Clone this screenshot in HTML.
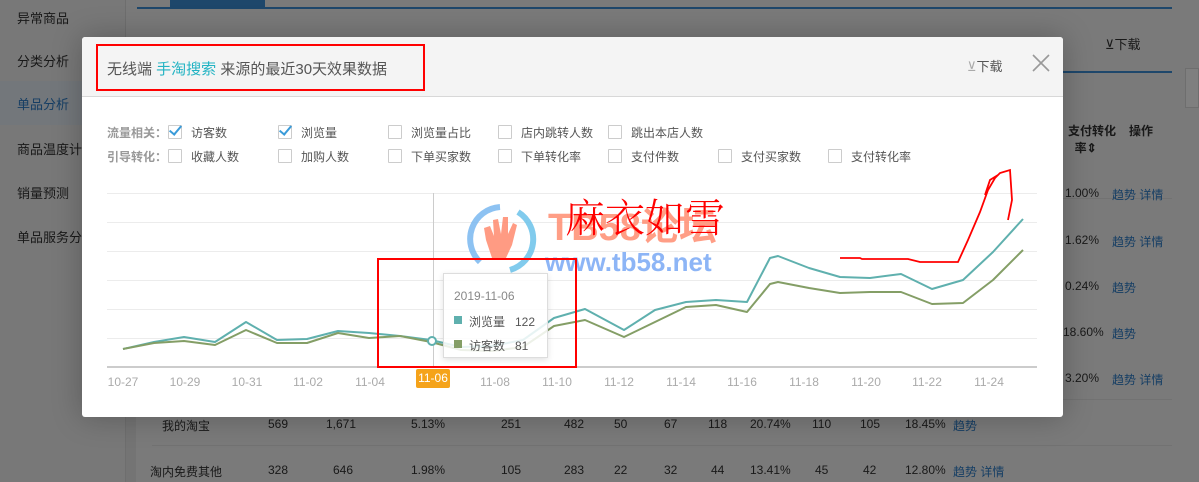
<!DOCTYPE html>
<html><head><meta charset="utf-8"><style>
*{margin:0;padding:0;box-sizing:border-box}
body{width:1199px;height:482px;overflow:hidden;font-family:"Liberation Sans","Noto Sans CJK SC",sans-serif;position:relative;font-size:12px;background:#f5f5f5}
.a{position:absolute;white-space:nowrap}
.side{position:absolute;left:0;top:0;width:126px;height:482px;background:#f0f0f0;border-right:1px solid #ddd}
.side div{position:absolute;left:17px;font-size:13px;color:#333}
.cb{position:absolute;width:14px;height:14px;border:1px solid #ccc;background:#fff;border-radius:1px}
.lb{position:absolute;font-size:12px;color:#555}
.ck::after{content:"";position:absolute;left:3px;top:-3px;width:5px;height:10px;border-right:2px solid #3a9bd9;border-bottom:2px solid #3a9bd9;transform:rotate(40deg)}
.xl{position:absolute;top:375px;font-size:12px;color:#aaa;width:40px;text-align:center}
.tr{position:absolute;font-size:12px;color:#333}
.lk{color:#2c7dc8}
.ov{position:absolute;left:0;top:0;width:1199px;height:482px;background:rgba(0,0,0,0.5)}
</style></head><body>
<div class="side">
<div style="top:8px">异常商品</div>
<div style="top:51px">分类分析</div>
<div style="top:81px;left:0;width:126px;height:44px;background:#e6eef7"></div>
<div style="top:94px;color:#2c7dc8">单品分析</div>
<div style="top:139px">商品温度计</div>
<div style="top:183px">销量预测</div>
<div style="top:227px">单品服务分</div>
</div>
<div class="a" style="left:137px;top:0;width:1035px;height:9px;border-bottom:2px solid #3d8fd6"></div>
<div class="a" style="left:170px;top:0;width:95px;height:9px;background:#3d8fd6"></div>
<div class="a" style="left:1060px;top:71px;width:112px;height:2px;background:#3d8fd6"></div>
<div class="a" style="left:1105px;top:34px;font-size:13px;color:#333">⊻下载</div>
<div class="a" style="left:1185px;top:68px;width:14px;height:40px;border:1px solid #ddd;background:#fff"></div>
<div class="a" style="left:1062px;top:198px;width:110px;height:1px;background:#e5e5e5"></div>
<div class="tr" style="left:1068px;top:122px;font-weight:bold">支付转化<br>&nbsp;&nbsp;率⇕</div>
<div class="tr" style="left:1129px;top:122px;font-weight:bold">操作</div>
<div class="tr" style="left:1065px;top:186px">1.00%</div><div class="tr lk" style="left:1112px;top:186px">趋势 详情</div>
<div class="tr" style="left:1065px;top:233px">1.62%</div><div class="tr lk" style="left:1112px;top:233px">趋势 详情</div>
<div class="tr" style="left:1065px;top:279px">0.24%</div><div class="tr lk" style="left:1112px;top:279px">趋势</div>
<div class="tr" style="left:1063px;top:325px">18.60%</div><div class="tr lk" style="left:1112px;top:325px">趋势</div>
<div class="tr" style="left:1065px;top:371px">3.20%</div><div class="tr lk" style="left:1112px;top:371px">趋势 详情</div>
<div class="a" style="left:152px;top:399px;width:1020px;height:1px;background:#e5e5e5"></div>
<div class="a" style="left:152px;top:445px;width:1020px;height:1px;background:#e5e5e5"></div>
<div class="a" style="left:126px;top:400px;width:10px;height:82px;background:#e8e8e8"></div>
<div class="tr" style="left:162px;top:417px">我的淘宝</div>
<div class="tr" style="left:150px;top:463px">淘内免费其他</div>
<div class="tr" style="left:268px;top:417px">569</div><div class="tr" style="left:326px;top:417px">1,671</div><div class="tr" style="left:411px;top:417px">5.13%</div><div class="tr" style="left:501px;top:417px">251</div><div class="tr" style="left:564px;top:417px">482</div><div class="tr" style="left:614px;top:417px">50</div><div class="tr" style="left:664px;top:417px">67</div><div class="tr" style="left:708px;top:417px">118</div><div class="tr" style="left:750px;top:417px">20.74%</div><div class="tr" style="left:812px;top:417px">110</div><div class="tr" style="left:860px;top:417px">105</div><div class="tr" style="left:905px;top:417px">18.45%</div><div class="tr lk" style="left:953px;top:417px">趋势</div>
<div class="tr" style="left:268px;top:463px">328</div><div class="tr" style="left:333px;top:463px">646</div><div class="tr" style="left:411px;top:463px">1.98%</div><div class="tr" style="left:501px;top:463px">105</div><div class="tr" style="left:564px;top:463px">283</div><div class="tr" style="left:614px;top:463px">22</div><div class="tr" style="left:664px;top:463px">32</div><div class="tr" style="left:711px;top:463px">44</div><div class="tr" style="left:750px;top:463px">13.41%</div><div class="tr" style="left:815px;top:463px">45</div><div class="tr" style="left:863px;top:463px">42</div><div class="tr" style="left:905px;top:463px">12.80%</div><div class="tr lk" style="left:953px;top:463px">趋势 详情</div>
<div class="ov"></div>

<div class="a" style="left:82px;top:37px;width:981px;height:380px;background:#fff;border-radius:3px;box-shadow:0 0 30px rgba(0,0,0,.25)">
 <div style="position:absolute;left:0;top:0;width:981px;height:60px;background:#f4f4f4;border-bottom:1px solid #d8d8d8;border-radius:3px 3px 0 0"></div>
</div>
<div class="a" style="left:96px;top:44px;width:329px;height:47px;border:2px solid #f00"></div>
<div class="a" style="left:107px;top:58px;font-size:15px;color:#555">无线端 <span style="color:#22b3c3">手淘搜索</span> 来源的最近30天效果数据</div>
<div class="a" style="left:967px;top:56px;font-size:13px;color:#555"><span style="color:#aaa">⊻</span>下载</div>
<svg class="a" style="left:1031px;top:53px" width="20" height="20"><path d="M2 2L18 18M18 2L2 18" stroke="#999" stroke-width="1.6"/></svg>

<div class="a" style="left:107px;top:124px;color:#999;font-weight:bold">流量相关：</div>
<div class="a" style="left:107px;top:148px;color:#999;font-weight:bold">引导转化：</div>
<div class="cb ck" style="left:168px;top:125px"></div><div class="lb" style="left:191px;top:124px">访客数</div>
<div class="cb ck" style="left:278px;top:125px"></div><div class="lb" style="left:301px;top:124px">浏览量</div>
<div class="cb" style="left:388px;top:125px"></div><div class="lb" style="left:411px;top:124px">浏览量占比</div>
<div class="cb" style="left:498px;top:125px"></div><div class="lb" style="left:521px;top:124px">店内跳转人数</div>
<div class="cb" style="left:608px;top:125px"></div><div class="lb" style="left:631px;top:124px">跳出本店人数</div>
<div class="cb" style="left:168px;top:149px"></div><div class="lb" style="left:191px;top:148px">收藏人数</div>
<div class="cb" style="left:278px;top:149px"></div><div class="lb" style="left:301px;top:148px">加购人数</div>
<div class="cb" style="left:388px;top:149px"></div><div class="lb" style="left:411px;top:148px">下单买家数</div>
<div class="cb" style="left:498px;top:149px"></div><div class="lb" style="left:521px;top:148px">下单转化率</div>
<div class="cb" style="left:608px;top:149px"></div><div class="lb" style="left:631px;top:148px">支付件数</div>
<div class="cb" style="left:718px;top:149px"></div><div class="lb" style="left:741px;top:148px">支付买家数</div>
<div class="cb" style="left:828px;top:149px"></div><div class="lb" style="left:851px;top:148px">支付转化率</div>

<svg class="a" style="left:0;top:0" width="1199" height="482">
 <g stroke="#ececec" stroke-width="1">
  <path d="M107 193.5H1037M107 222.5H1037M107 251.5H1037M107 280.5H1037M107 309.5H1037M107 338.5H1037"/>
 </g>
 <path d="M107 367H1037" stroke="#ccc" stroke-width="2"/>
 <path d="M433.5 193V367" stroke="#ccc"/>
 <g opacity="0.85">
  <path d="M480 262A32 32 0 0 1 500 207" stroke="#7ab8f0" stroke-width="6" fill="none"/>
  <path d="M518 212A32 32 0 0 1 510 270" stroke="#6cc3ea" stroke-width="6" fill="none"/>
  <path d="M492 258L486 240L484 228L490 226L494 236L493 220L498 219L501 234L503 217L508 217L508 234L513 223L517 225L512 245L506 258Z" fill="#ff8a6e"/>
  <text x="548" y="240" font-size="38" font-weight="bold" fill="#ff8e72" font-family="Liberation Sans,Noto Sans CJK SC,sans-serif">TB58论坛</text>
  <text x="545" y="271" font-size="26" font-weight="bold" fill="#7aa9f5" font-family="Liberation Sans,sans-serif">www.tb58.net</text>
 </g>
 <text x="565" y="232" font-size="40" fill="#f00" font-family="Noto Serif CJK SC,serif" font-weight="300">麻衣如雪</text>
 <path d="M840 258L860 258L862 259L908 259L920 262L958 262L968 240L980 212L988 190L995 178L1000 173L1010 170L1012 200L1008 220M985 195L990 180L998 175" stroke="#f00" stroke-width="1.8" fill="none"/>
 <polyline fill="none" stroke="#5fb0ae" stroke-width="2" stroke-linejoin="round" points="123,349 154,342 184,337 215,342 246,322 277,340 307,339 338,331 369,333 400,336 431,340 461,347 492,346 523,340 554,318 585,309 624,330 655,310 686,302 716,300 747,302 770,258 778,256 809,268 840,277 870,278 901,274 932,289 963,280 993,252 1023,219"/>
 <polyline fill="none" stroke="#849e66" stroke-width="2" stroke-linejoin="round" points="123,349 154,343 184,341 215,345 246,330 277,343 307,343 338,333 369,338 400,336 431,342 461,350 492,351 523,347 554,326 585,320 624,337 655,322 686,307 716,305 747,312 770,284 778,282 809,288 840,293 870,292 901,292 932,304 963,303 993,280 1023,250"/>
 <circle cx="432" cy="341" r="4" fill="#fff" stroke="#5fb0ae" stroke-width="2"/>
</svg>
<div class="a" style="left:377px;top:258px;width:200px;height:110px;border:2px solid #f00"></div>
<div class="a" style="left:443px;top:273px;width:105px;height:85px;background:rgba(255,255,255,.85);border:1px solid #ddd;box-shadow:0 2px 6px rgba(0,0,0,.12)"></div>
<div class="a" style="left:454px;top:289px;font-size:12px;color:#888">2019-11-06</div>
<div class="a" style="left:454px;top:316px;width:8px;height:8px;background:#5fb0ae"></div>
<div class="a" style="left:469px;top:313px;font-size:12px;color:#555">浏览量&nbsp;&nbsp;&nbsp;122</div>
<div class="a" style="left:454px;top:340px;width:8px;height:8px;background:#849e66"></div>
<div class="a" style="left:469px;top:337px;font-size:12px;color:#555">访客数&nbsp;&nbsp;&nbsp;81</div>

<div class="xl" style="left:103px">10-27</div><div class="xl" style="left:165px">10-29</div><div class="xl" style="left:227px">10-31</div><div class="xl" style="left:288px">11-02</div><div class="xl" style="left:350px">11-04</div>
<div class="a" style="left:416px;top:369px;width:34px;height:19px;background:#f5a31a;border-radius:2px;color:#fff;font-size:12px;text-align:center;line-height:19px">11-06</div>
<div class="xl" style="left:475px">11-08</div><div class="xl" style="left:537px">11-10</div><div class="xl" style="left:599px">11-12</div><div class="xl" style="left:661px">11-14</div><div class="xl" style="left:722px">11-16</div><div class="xl" style="left:784px">11-18</div><div class="xl" style="left:846px">11-20</div><div class="xl" style="left:907px">11-22</div><div class="xl" style="left:969px">11-24</div>
</body></html>
